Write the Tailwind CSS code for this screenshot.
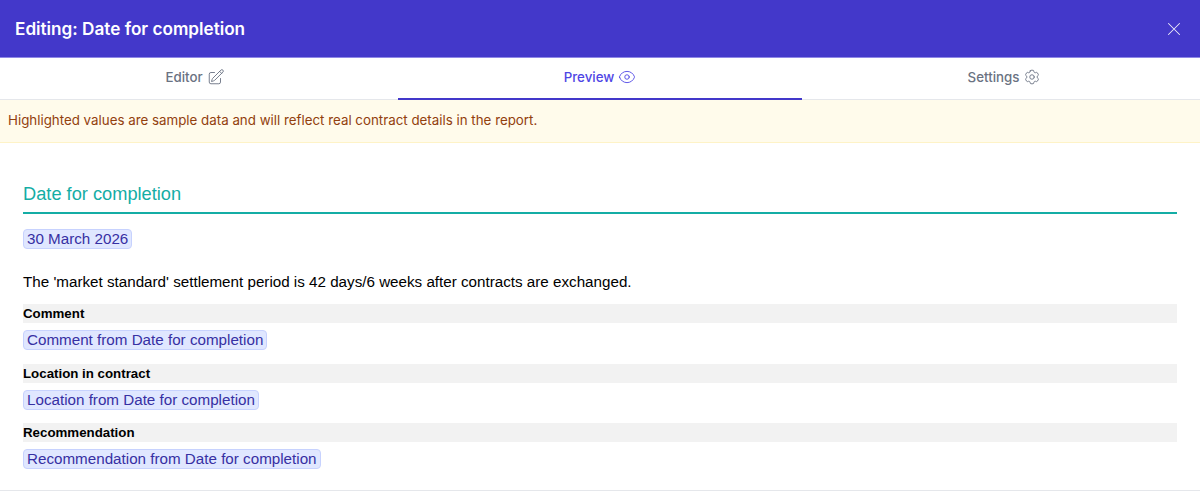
<!DOCTYPE html>
<html lang="en">
<head>
<meta charset="utf-8">
<title>Editing: Date for completion</title>
<script src="https://cdn.jsdelivr.net/npm/@tailwindcss/browser@4"></script>
</head>
<body class="bg-white font-['Inter',sans-serif] overflow-hidden">
<div class="h-[491px] w-[1200px] flex flex-col border-b border-gray-200">

  <!-- header -->
  <div class="h-[58px] shrink-0 flex items-center justify-between bg-[#4338ca] border-b border-[#8f88e6] pl-[15px] pr-[15px]">
    <h1 class="text-[17.15px] leading-6 font-semibold text-white">Editing: Date for completion</h1>
    <svg class="w-[22px] h-[22px] text-white/90" fill="none" viewBox="0 0 24 24" stroke="currentColor" stroke-width="1.1"><path stroke-linecap="round" stroke-linejoin="round" d="M6 18 18 6M6 6l12 12"/></svg>
  </div>

  <!-- tabs -->
  <div class="h-[42px] shrink-0 grid grid-cols-[398px_404px_398px] border-b border-gray-200 text-[13.3px] leading-5 font-medium">
    <div class="flex items-start justify-center gap-[4px] pt-[9px] pr-[8px] text-gray-500">
      Editor
      <svg class="w-[18px] h-[18px] mt-px" fill="none" viewBox="0 0 24 24" stroke="currentColor" stroke-width="1.2"><path stroke-linecap="round" stroke-linejoin="round" d="m16.862 4.487 1.687-1.688a1.875 1.875 0 1 1 2.652 2.652L10.582 16.07a4.5 4.5 0 0 1-1.897 1.13L6 18l.8-2.685a4.5 4.5 0 0 1 1.13-1.897l8.932-8.931Zm0 0L19.5 7.125M18 14v4.75A2.25 2.25 0 0 1 15.75 21H5.25A2.25 2.25 0 0 1 3 18.75V8.25A2.25 2.25 0 0 1 5.25 6H10"/></svg>
    </div>
    <div class="flex items-start justify-center gap-[4px] pt-[9px] text-[#4f46e5] border-b-2 border-[#4338ca] -mb-px">
      Preview
      <svg class="w-[18px] h-[18px] mt-px" fill="none" viewBox="0 0 24 24" stroke="currentColor" stroke-width="1.2"><path stroke-linecap="round" stroke-linejoin="round" d="M2.036 12.322a1.012 1.012 0 0 1 0-.639C3.423 7.51 7.36 4.5 12 4.5c4.638 0 8.573 3.007 9.963 7.178.07.207.07.431 0 .639C20.577 16.49 16.64 19.5 12 19.5c-4.638 0-8.573-3.007-9.963-7.178Z"/><path stroke-linecap="round" stroke-linejoin="round" d="M15 12a3 3 0 1 1-6 0 3 3 0 0 1 6 0Z"/></svg>
    </div>
    <div class="flex items-start justify-center gap-[4px] pt-[9px] pl-[7px] text-gray-500">
      Settings
      <svg class="w-[18px] h-[18px] mt-px" fill="none" viewBox="0 0 24 24" stroke="currentColor" stroke-width="1.2"><path stroke-linecap="round" stroke-linejoin="round" d="M9.594 3.94c.09-.542.56-.94 1.11-.94h2.593c.55 0 1.02.398 1.11.94l.213 1.281c.063.374.313.686.645.87.074.04.147.083.22.127.325.196.72.257 1.075.124l1.217-.456a1.125 1.125 0 0 1 1.37.49l1.296 2.247a1.125 1.125 0 0 1-.26 1.431l-1.003.827c-.293.241-.438.613-.43.992a7.723 7.723 0 0 1 0 .255c-.008.378.137.75.43.991l1.004.827c.424.35.534.955.26 1.43l-1.298 2.247a1.125 1.125 0 0 1-1.369.491l-1.217-.456c-.355-.133-.75-.072-1.076.124a6.47 6.47 0 0 1-.22.128c-.331.183-.581.495-.644.869l-.213 1.281c-.09.543-.56.94-1.11.94h-2.594c-.55 0-1.019-.398-1.11-.94l-.213-1.281c-.062-.374-.312-.686-.644-.87a6.52 6.52 0 0 1-.22-.127c-.325-.196-.72-.257-1.076-.124l-1.217.456a1.125 1.125 0 0 1-1.369-.49l-1.297-2.247a1.125 1.125 0 0 1 .26-1.431l1.004-.827c.292-.24.437-.613.43-.991a6.932 6.932 0 0 1 0-.255c.007-.38-.138-.751-.43-.992l-1.004-.827a1.125 1.125 0 0 1-.26-1.43l1.297-2.247a1.125 1.125 0 0 1 1.37-.491l1.216.456c.356.133.751.072 1.076-.124.072-.044.146-.086.22-.128.332-.183.582-.495.644-.869l.214-1.28Z"/><path stroke-linecap="round" stroke-linejoin="round" d="M15 12a3 3 0 1 1-6 0 3 3 0 0 1 6 0Z"/></svg>
    </div>
  </div>

  <!-- notice -->
  <div class="h-[43px] shrink-0 flex items-center px-2 bg-[#fffbeb] border-b border-[#fef3c7] text-[13.33px] text-[#92400e]">
    Highlighted values are sample data and will reflect real contract details in the report.
  </div>

  <!-- report preview -->
  <div class="px-[23px] pt-[40px] font-['Liberation_Sans',Arial,sans-serif] text-black">
    <h2 class="text-[18.24px] leading-[21px] text-[#14ada5] pb-[8px] border-b-2 border-[#14ada5]">Date for completion</h2>
    <div class="mt-[15px] flex">
      <span class="h-[20px] leading-[18px] text-[15.2px] px-[3px] rounded-[4px] bg-[#e0e7ff] border border-[#c7d2fe] text-[#3730a3]">30 March 2026</span>
    </div>
    <p class="mt-[23px] text-[15.2px] leading-[20px]">The 'market standard' settlement period is 42 days/6 weeks after contracts are exchanged.</p>

    <div class="mt-[12px] h-[19px] bg-[#f2f2f2] text-[13.3px] leading-[19px] font-bold">Comment</div>
    <div class="mt-[7px] flex">
      <span class="h-[20px] leading-[18px] text-[15.2px] px-[3px] rounded-[4px] bg-[#e0e7ff] border border-[#c7d2fe] text-[#3730a3]">Comment from Date for completion</span>
    </div>

    <div class="mt-[14px] h-[19px] bg-[#f2f2f2] text-[13.3px] leading-[19px] font-bold">Location in contract</div>
    <div class="mt-[7px] flex">
      <span class="h-[20px] leading-[18px] text-[15.2px] px-[3px] rounded-[4px] bg-[#e0e7ff] border border-[#c7d2fe] text-[#3730a3]">Location from Date for completion</span>
    </div>

    <div class="mt-[13px] h-[19px] bg-[#f2f2f2] text-[13.3px] leading-[19px] font-bold">Recommendation</div>
    <div class="mt-[7px] flex">
      <span class="h-[20px] leading-[18px] text-[15.2px] px-[3px] rounded-[4px] bg-[#e0e7ff] border border-[#c7d2fe] text-[#3730a3]">Recommendation from Date for completion</span>
    </div>
  </div>
</div>
</body>
</html>
